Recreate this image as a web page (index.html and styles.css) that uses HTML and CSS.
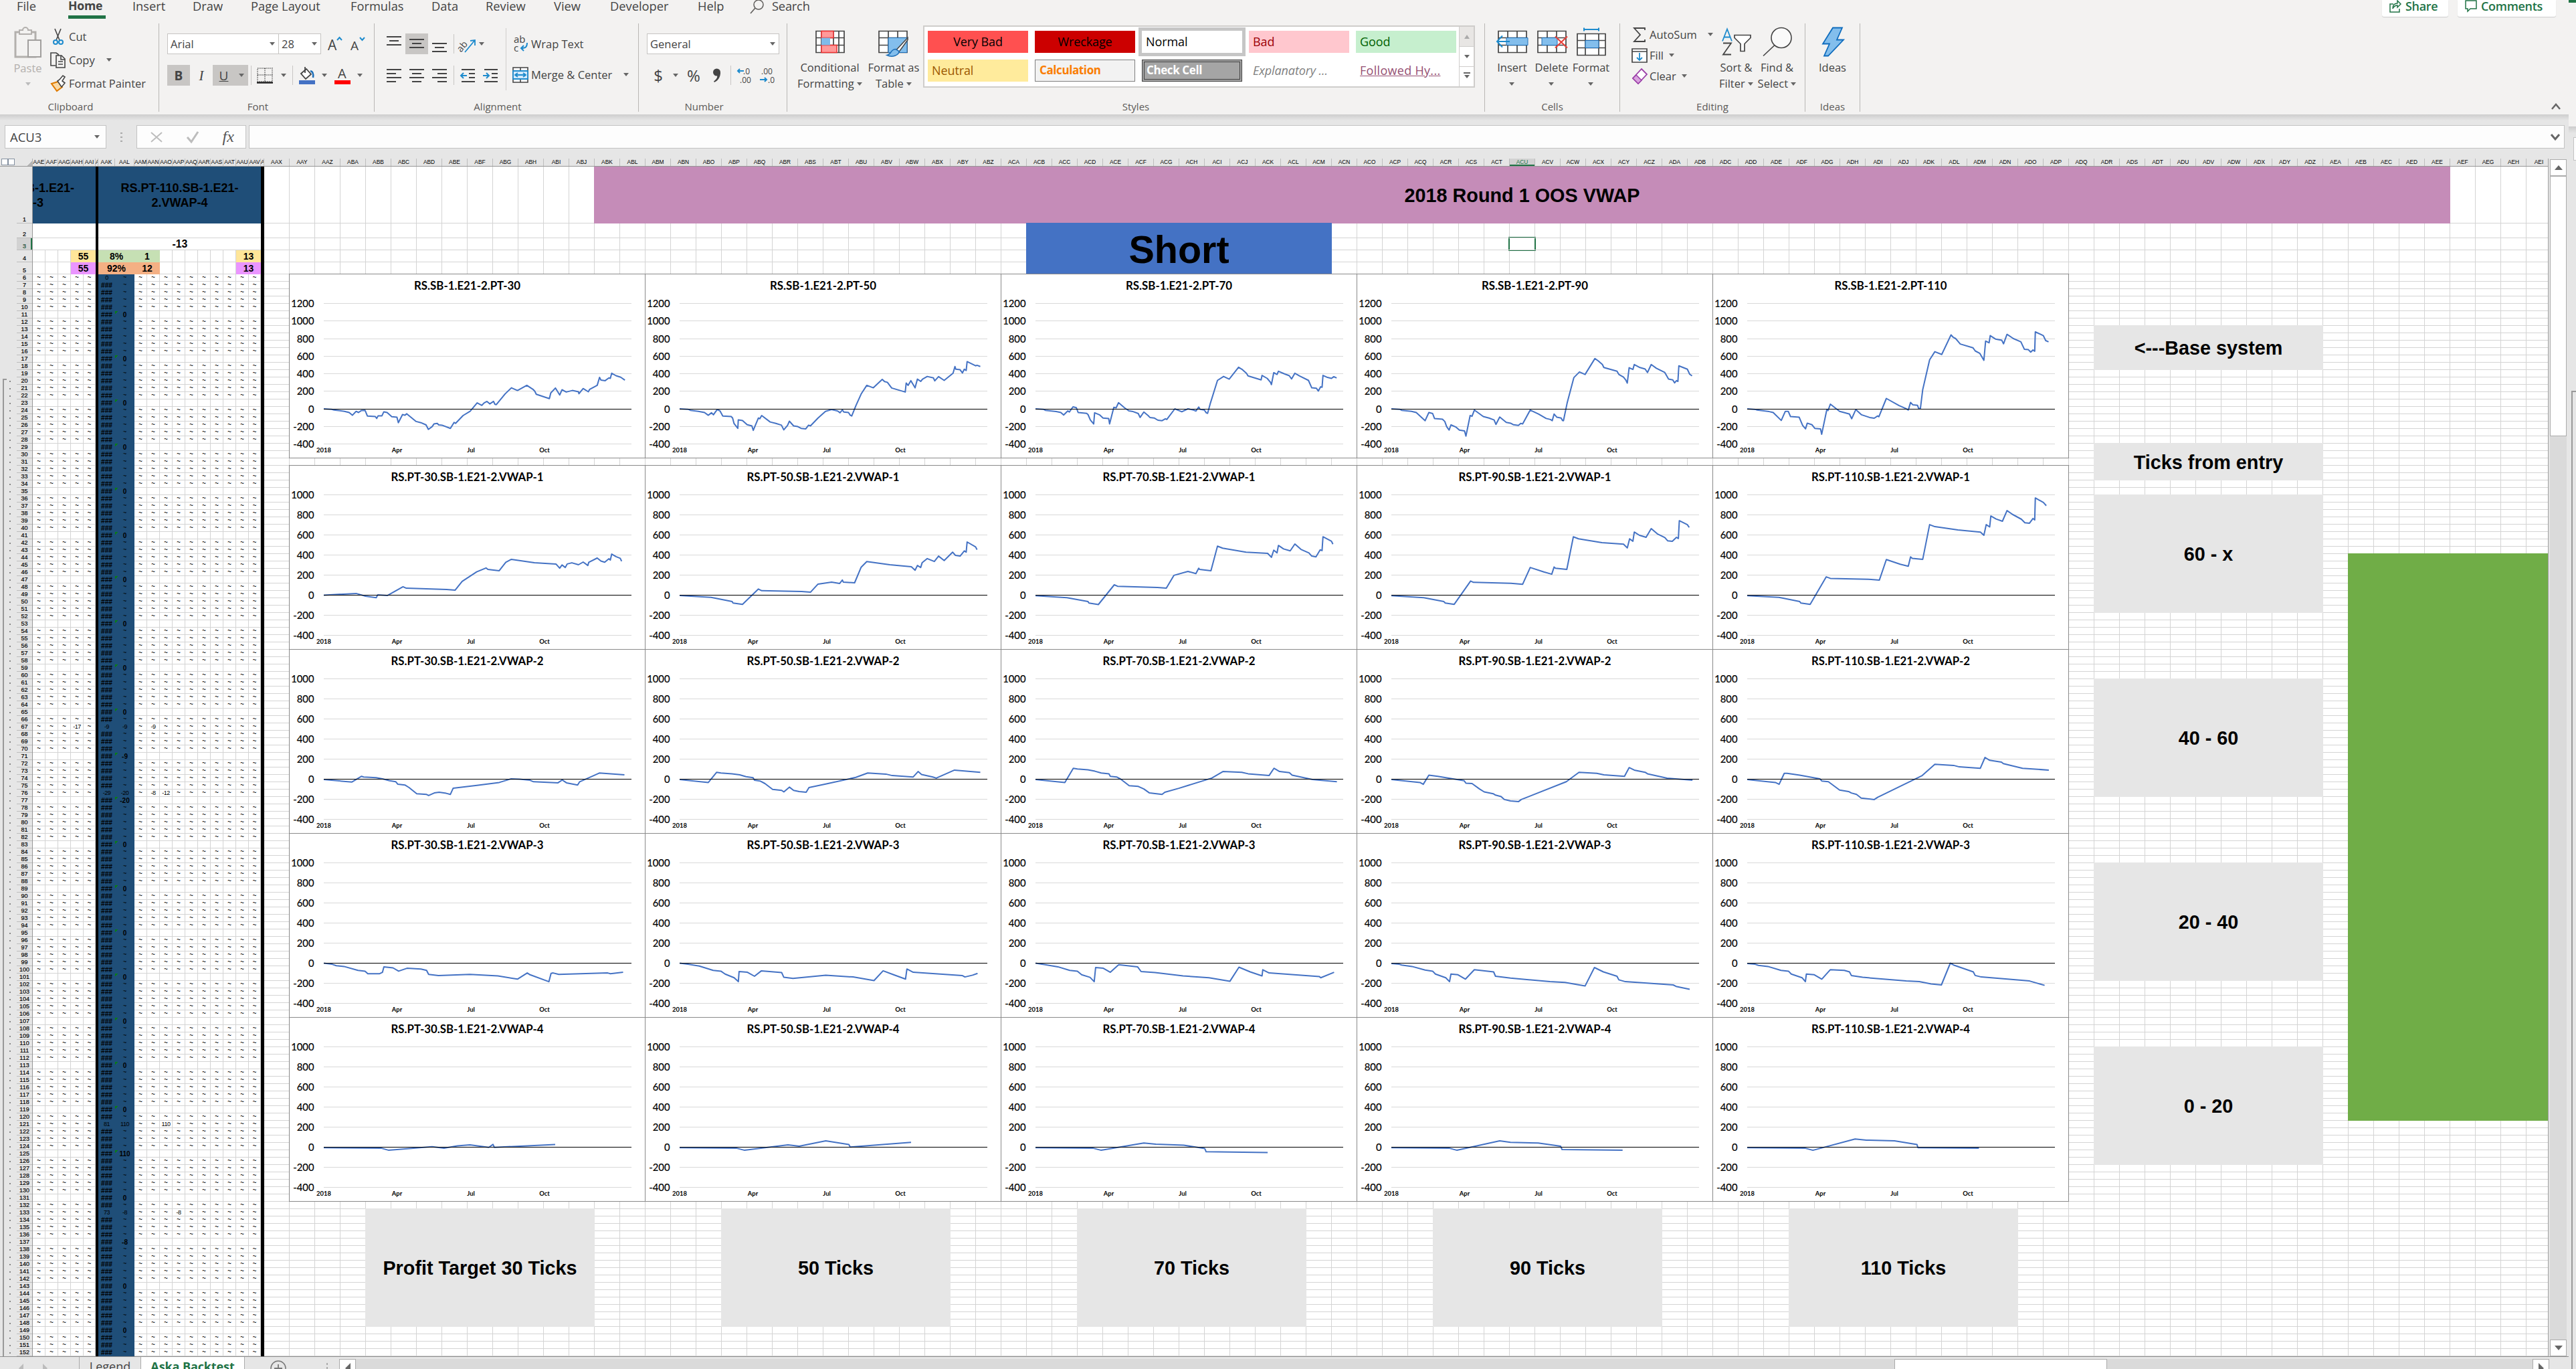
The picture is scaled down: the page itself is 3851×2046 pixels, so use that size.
FILE: index.html
```
<!DOCTYPE html>
<html lang="en">
<head>
<meta charset="utf-8">
<title>Aska Backtest</title>
<link rel="stylesheet" href="styles.css">
</head>
<body>
<div class="window">
  <header class="tabs-bar">
    <nav class="tabs">
      <span>File</span><span class="tab-active">Home</span><span>Insert</span><span>Draw</span><span>Page Layout</span><span>Formulas</span><span>Data</span><span>Review</span><span>View</span><span>Developer</span><span>Help</span>
      <svg class="search-icon" width="22" height="24" viewBox="0 0 22 24"><circle cx="13" cy="7" r="7" fill="none" stroke="#605e5c" stroke-width="1.5"/><path d="M8 12L1 20" stroke="#605e5c" stroke-width="1.6"/></svg>
      <span class="search">Search</span>
    </nav>
    <div class="share-buttons">
      <div class="pill"><svg width="18" height="20" viewBox="0 0 18 20"><path d="M6 7H1v12h14v-5M5 14c0-6 3-8 7-8V2l5 5-5 5V9c-3 0-5 1-7 5z" fill="none" stroke="#217346" stroke-width="1.5"/></svg>Share</div>
      <div class="pill comments"><svg width="18" height="20" viewBox="0 0 18 20"><path d="M1 2h16v12H8l-4 4v-4H1z" fill="none" stroke="#217346" stroke-width="1.5"/></svg>Comments</div>
    </div>
  </header>

  <section class="ribbon">
    <div class="group g-clipboard">
      <div class="body">
        <div class="paste">
          <svg width="42" height="46" viewBox="0 0 42 46"><path d="M2 7h30v37H2z" fill="#f3f2f1" stroke="#b3b0ad" stroke-width="3"/><path d="M8 4h5a4 4 0 0 1 8 0h5v6H8z" fill="#f3f2f1" stroke="#b3b0ad" stroke-width="2"/><path d="M21 19h19v25H21z" fill="#f3f2f1" stroke="#a19f9d" stroke-width="2"/></svg>
          <span>Paste</span><i class="arrow faded"></i>
        </div>
        <div class="lines">
          <div class="line"><svg width="24" height="24" viewBox="0 0 24 24"><path d="M7 0l7 17M16 0L9 17" stroke="#444" stroke-width="1.6"/><circle cx="8" cy="20" r="3" fill="none" stroke="#1e8bcd" stroke-width="2"/><circle cx="16" cy="20" r="3" fill="none" stroke="#1e8bcd" stroke-width="2"/></svg>Cut</div>
          <div class="line"><svg width="24" height="24" viewBox="0 0 24 24"><path d="M8 20H1V1h8l4 3M9 5h8l5 5v13H9zM16 5v6h6M12 14h7M12 18h7" fill="none" stroke="#444" stroke-width="1.6"/></svg>Copy<i class="arrow far"></i></div>
          <div class="line"><svg width="24" height="24" viewBox="0 0 24 24"><path d="M2 12l10-3 6 8-8 6z" fill="#fbd9a4" stroke="#e07b00" stroke-width="2"/><path d="M11 8l6 9 5-6-4-3 4-6-3-2-5 6z" fill="#fff" stroke="#444" stroke-width="1.6"/></svg>Format Painter</div>
        </div>
      </div>
      <div class="caption">Clipboard</div>
    </div>

    <div class="group g-font">
      <div class="body stack">
        <div class="bar">
          <div class="select face">Arial<i class="arrow"></i></div><div class="select size">28<i class="arrow"></i></div>
          <svg class="grow" width="26" height="26" viewBox="0 0 26 26"><text x="2" y="22" class="ic" font-size="21">A</text><path d="M16 7l3.500-4 3.500 4" fill="none" stroke="#1e8bcd" stroke-width="2"/></svg>
          <svg class="shrink" width="26" height="26" viewBox="0 0 26 26"><text x="2" y="22" class="ic" font-size="19">A</text><path d="M16 3l3.500 4 3.500-4" fill="none" stroke="#1e8bcd" stroke-width="2"/></svg>
        </div>
        <div class="font-tools">
          <b class="pressed">B</b><em>I</em><div class="pressed under"><u>U</u><i class="arrow"></i></div><i class="sep"></i>
          <svg width="24" height="24" viewBox="0 0 24 24"><path d="M1 1h22v20H1zM12 1v20M1 11h22" fill="none" stroke="#555" stroke-width="1.4" stroke-dasharray="1.500 1.500"/><path d="M0 22.500h24" stroke="#222" stroke-width="2.500"/></svg><i class="arrow"></i><i class="sep"></i>
          <svg width="26" height="26" viewBox="0 0 26 26"><path d="M4 10l8-7 7 8-8 7zM10 0v9" fill="#fff" stroke="#444" stroke-width="1.800"/><path d="M18 6c4 1 5 4 4 10" stroke="#1e6fb8" stroke-width="2.500" fill="none"/><path d="M1 20h24v6H1z" fill="#4472c4"/></svg><i class="arrow"></i>
          <svg width="26" height="26" viewBox="0 0 26 26"><text x="6" y="17" class="ic" font-size="20">A</text><path d="M1 20h24v6H1z" fill="#f00"/></svg><i class="arrow"></i>
        </div>
      </div>
      <div class="caption">Font</div>
    </div>

    <div class="group g-align">
      <div class="body">
        <div class="align-tools">
          <svg width="22" height="26" viewBox="0 0 22 26"><path d="M0 2h22M4 8h14M0 14h22" class="ln"/></svg>
          <span class="pressed"><svg width="22" height="26" viewBox="0 0 22 26"><path d="M0 6h22M4 12h14M0 18h22" class="ln"/></svg></span>
          <svg width="22" height="26" viewBox="0 0 22 26"><path d="M0 12h22M4 18h14M0 24h22" class="ln"/></svg>
          <i class="sep"></i>
          <svg width="26" height="26" viewBox="0 0 26 26"><text x="-4" y="18" class="ic" font-size="14" transform="rotate(-50 8 14)">ab</text><path d="M9 25L24 7M17 8l7-1v8" fill="none" stroke="#1e8bcd" stroke-width="1.800"/></svg>
          <i class="arrow first"></i>
          <svg width="22" height="22" viewBox="0 0 22 22"><path d="M0 2h22M0 8h14M0 14h22M0 20h14" class="ln"/></svg>
          <svg width="22" height="22" viewBox="0 0 22 22"><path d="M0 2h22M4 8h14M0 14h22M4 20h14" class="ln"/></svg>
          <svg width="22" height="22" viewBox="0 0 22 22"><path d="M0 2h22M8 8h14M0 14h22M8 20h14" class="ln"/></svg>
          <i class="sep"></i>
          <svg width="22" height="22" viewBox="0 0 22 22"><path d="M2 2h20M13 8h9M13 14h9M2 20h20" class="ln"/><path d="M10 11H1M5 7l-4 4 4 4" fill="none" stroke="#1e8bcd" stroke-width="2"/></svg>
          <svg width="22" height="22" viewBox="0 0 22 22"><path d="M2 2h20M13 8h9M13 14h9M2 20h20" class="ln"/><path d="M0 11h9M5 7l4 4-4 4" fill="none" stroke="#1e8bcd" stroke-width="2"/></svg>
        </div>
        <div class="merge-tools">
          <div class="line"><svg width="24" height="26" viewBox="0 0 24 26"><text x="2" y="11" class="ic" font-size="15">ab</text><text x="2" y="24" class="ic" font-size="15">c</text><path d="M22 11c0 6-2 8-9 8M17 15l-4 4 4 4" fill="none" stroke="#1e8bcd" stroke-width="2"/></svg>Wrap Text</div>
          <div class="line"><svg width="24" height="24" viewBox="0 0 24 24"><path d="M1 1h22v22H1zM12 1v5M12 18v5" fill="#fff" stroke="#444" stroke-width="1.600"/><path d="M1 6h22v12H1z" fill="#d5eafb" stroke="#1e8bcd" stroke-width="1.800"/><path d="M4 12h16M8 9l-4 3 4 3M16 9l4 3-4 3" fill="none" stroke="#1e8bcd" stroke-width="1.800"/></svg>Merge &amp; Center<i class="arrow far"></i></div>
        </div>
      </div>
      <div class="caption">Alignment</div>
    </div>

    <div class="group g-number">
      <div class="body stack">
        <div class="select general">General<i class="arrow"></i></div>
        <div class="number-tools"><span>$</span><i class="arrow"></i><span>%</span>
          <svg width="14" height="22" viewBox="0 0 14 22"><circle cx="6.500" cy="6" r="5.500" fill="#444"/><path d="M12 6c0 7-3 12-9 15l-1-1.500c4-3 6-6 5-9z" fill="#444"/></svg>
          <i class="sep"></i>
          <svg width="26" height="26" viewBox="0 0 26 26"><text x="10" y="11" class="ic" font-size="12">.0</text><text x="5" y="24" class="ic" font-size="12">.00</text><path d="M11 6H2M5 3L2 6l3 3" fill="none" stroke="#1e8bcd" stroke-width="2"/></svg>
          <svg width="26" height="26" viewBox="0 0 26 26"><text x="4" y="11" class="ic" font-size="12">.00</text><text x="14" y="24" class="ic" font-size="12">.0</text><path d="M2 19h10M9 16l3 3-3 3" fill="none" stroke="#1e8bcd" stroke-width="2"/></svg>
        </div>
      </div>
      <div class="caption">Number</div>
    </div>

    <div class="group g-styles">
      <div class="body">
        <div class="big cond"><svg width="44" height="36" viewBox="0 0 44 36"><path d="M1 2h42v32H1zM9 2v32M27 2v32M35 2v32M1 12h42M1 23h42" fill="#fff" stroke="#444" stroke-width="1.700"/><path d="M9 2h18v10H9zM9 23h23v11H9z" fill="#ff9999" stroke="#e33" stroke-width="1.500"/><path d="M9 12h13v11H9z" fill="#7fbbea"/></svg><span>Conditional<br>Formatting <i class="arrow"></i></span></div>
        <div class="big table"><svg width="46" height="44" viewBox="0 0 46 44"><path d="M1 6h42v32H1zM15 6v32M29 6v32M1 16h42M1 27h42" fill="#fff" stroke="#444" stroke-width="1.700"/><path d="M15 16h28v22H15z" fill="#83beec" stroke="#1e6fb8"/><path d="M44 16L27 34l4 3 13-18z" fill="#fff" stroke="#444" stroke-width="1.500"/><path d="M26 33c-8 0-6 8-13 9 8 4 18 0 18-6z" fill="#83beec" stroke="#1e6fb8" stroke-width="1.500"/></svg><span>Format as<br>Table <i class="arrow"></i></span></div>
        <div class="gallery">
          <div class="swatches">
            <span class="sw very-bad">Very Bad</span><span class="sw wreckage">Wreckage</span><span class="sw normal">Normal</span><span class="sw bad">Bad</span><span class="sw good">Good</span>
            <span class="sw neutral">Neutral</span><span class="sw calc">Calculation</span><span class="sw check">Check Cell</span><span class="sw expl">Explanatory ...</span><span class="sw follow">Followed Hy...</span>
          </div>
          <div class="spin"><span class="off"><i class="arrow up"></i></span><span><i class="arrow"></i></span><span><i class="arrow lined"></i></span></div>
        </div>
      </div>
      <div class="caption">Styles</div>
    </div>

    <div class="group g-cells">
      <div class="body">
        <div class="big"><svg width="48" height="36" viewBox="0 0 48 36"><path d="M3 2h42v32H3zM17 2v32M31 2v32M3 12h42M3 23h42" fill="#fff" stroke="#444" stroke-width="1.700"/><path d="M15 12h32v11H15z" fill="#83beec" stroke="#1e6fb8"/><path d="M20 17.500H2M9 9l-8 8.500 8 8.500" fill="none" stroke="#1e8bcd" stroke-width="2"/></svg><span>Insert<br><i class="arrow"></i></span></div>
        <div class="big"><svg width="48" height="36" viewBox="0 0 48 36"><path d="M3 2h42v32H3zM17 2v32M31 2v32M3 12h42M3 23h42" fill="#fff" stroke="#444" stroke-width="1.700"/><path d="M9 12h23v11H9z" fill="#83beec" stroke="#1e6fb8"/><path d="M29 10l18 17M47 10L29 27" stroke="#e8413b" stroke-width="2.200"/></svg><span>Delete<br><i class="arrow"></i></span></div>
        <div class="big"><svg width="48" height="44" viewBox="0 0 48 44"><path d="M3 10h42v32H3zM15 10v32M35 10v32M3 20h42M3 31h42" fill="#fff" stroke="#444" stroke-width="1.700"/><path d="M15 20h20v11H15z" fill="#83beec" stroke="#1e6fb8"/><path d="M13 1v5M35 1v5M13 3.500h22" stroke="#1e8bcd" stroke-width="2"/></svg><span>Format<br><i class="arrow"></i></span></div>
      </div>
      <div class="caption">Cells</div>
    </div>

    <div class="group g-edit">
      <div class="body">
        <div class="lines">
          <div class="line"><svg width="24" height="24" viewBox="0 0 24 24"><path d="M20 5V2H4l9 10-9 10h16v-3" fill="none" stroke="#444" stroke-width="1.800"/></svg>AutoSum<i class="arrow far"></i></div>
          <div class="line"><svg width="24" height="24" viewBox="0 0 24 24"><path d="M1 2h22v20H1zM1 6h22" fill="#fff" stroke="#444" stroke-width="1.700"/><path d="M12 8v11M8 15l4 4 4-4" fill="none" stroke="#1e8bcd" stroke-width="1.800"/></svg>Fill<i class="arrow near"></i></div>
          <div class="line"><svg width="24" height="24" viewBox="0 0 24 24"><path d="M15 1l8 8-13 14-8-8z" fill="#fff" stroke="#9b3fa8" stroke-width="1.800"/><path d="M7 10l8 8-5 5-8-8z" fill="#d9a3df" stroke="#9b3fa8" stroke-width="1.500"/></svg>Clear<i class="arrow near"></i></div>
        </div>
        <div class="big sort"><svg width="44" height="42" viewBox="0 0 44 42"><path d="M1 20L8 2l7 18M4 14h8" fill="none" stroke="#1e8bcd" stroke-width="1.800"/><path d="M2 23h12L2 40h12" fill="none" stroke="#444" stroke-width="1.800"/><path d="M19 11h24v4l-9 9v11h-6V24l-9-9z" fill="#fff" stroke="#444" stroke-width="1.700"/></svg><span>Sort &amp;<br>Filter <i class="arrow"></i></span></div>
        <div class="big find"><svg width="44" height="44" viewBox="0 0 44 44"><circle cx="28" cy="16" r="15" fill="#fafafa" stroke="#444" stroke-width="1.600"/><path d="M18 27L1 43" stroke="#444" stroke-width="1.700"/></svg><span>Find &amp;<br>Select <i class="arrow"></i></span></div>
      </div>
      <div class="caption">Editing</div>
    </div>

    <div class="group g-ideas">
      <div class="body"><div class="big"><svg width="34" height="44" viewBox="0 0 34 44"><path d="M17 1h14l-8 18h10L10 43H4l8-18H2z" fill="#83beec" stroke="#0f6cbd" stroke-width="1.800"/></svg><span>Ideas</span></div></div>
      <div class="caption">Ideas</div>
    </div>
    <svg class="collapse" width="16" height="12" viewBox="0 0 16 12"><path d="M2 10l6-7 6 7" fill="none" stroke="#666" stroke-width="2.500"/></svg>
  </section>

  <section class="formula-bar">
    <div class="name-box">ACU3<i class="arrow"></i></div>
    <div class="dots"><i></i><i></i><i></i></div>
    <div class="fx-box">
      <svg width="20" height="18" viewBox="0 0 20 18"><path d="M2 2l16 14M18 2L2 16" stroke="#bdbdbd" stroke-width="2"/></svg>
      <svg width="20" height="18" viewBox="0 0 20 18"><path d="M2 9l6 7L18 1" fill="none" stroke="#bdbdbd" stroke-width="3"/></svg>
      <span class="fx">fx</span>
    </div>
    <div class="formula"><svg width="14" height="12" viewBox="0 0 14 12"><path d="M1 2l6 7 6-7" fill="none" stroke="#666" stroke-width="3"/></svg></div>
  </section>

  <main class="workspace">
    <div class="sheet">
      <div class="col-heads">
        <div class="levels"><i></i><i></i></div><div class="corner"></div><div class="cols-left" id="colsLeft"></div><div class="cols-right" id="colsRight"></div>
      </div>
      <div class="sheet-body">
        <div class="gutter"><div class="outline"></div></div>
        <div class="row-heads" id="rowHeads"></div>
        <div class="cells" id="cells">
          <div class="strategy s3"><span>RS.PT-110.SB-1.E21-<br>2.VWAP-3</span></div>
          <div class="strategy s4"><span>RS.PT-110.SB-1.E21-<br>2.VWAP-4</span></div>
          <div class="blank b2"></div><div class="blank b3"></div><div class="blank b4"></div><div class="total">-13</div>
          <div class="stat y1">55</div><div class="stat p1">55</div>
          <div class="stat win">8%</div><div class="stat win n">1</div><div class="stat loss">92%</div><div class="stat loss n">12</div>
          <div class="stat y2">13</div><div class="stat p2">13</div>
          <div class="divider d1"></div><div class="divider d2"></div>
        </div>
        <div class="canvas" id="canvas">
          <div class="merged banner">2018 Round 1 OOS VWAP</div>
          <div class="merged short">Short</div>
          <div class="active-cell"></div>
          <div class="merged side base">&lt;---Base system</div>
          <div class="merged side entry">Ticks from entry</div>
          <div class="merged side t60">60 - x</div>
          <div class="merged side t40">40 - 60</div>
          <div class="merged side t20">20 - 40</div>
          <div class="merged side t0">0 - 20</div>
          <div class="merged green"></div>
          <div class="merged foot f30">Profit Target 30 Ticks</div>
          <div class="merged foot f50">50 Ticks</div>
          <div class="merged foot f70">70 Ticks</div>
          <div class="merged foot f90">90 Ticks</div>
          <div class="merged foot f110">110 Ticks</div>
        </div>
      </div>
    </div>
    <div class="vscroll"><div class="btn"><i class="arrow up"></i></div><div class="vthumb"></div><div class="vtrack"></div><div class="btn down"><i class="arrow"></i></div></div>
  </main>

  <footer class="sheet-tabs">
    <svg class="nav" width="118" height="19" viewBox="0 0 118 19"><path d="M35 10v14l-7-7zM64 10v14l7-7z" fill="#bcbcbc"/></svg>
    <span class="stab">Legend</span><span class="stab current">Aska Backtest</span>
    <svg class="add" width="140" height="19" viewBox="0 0 140 19"><circle cx="50" cy="17" r="11" fill="none" stroke="#777" stroke-width="1.500"/><path d="M50 11v12M44 17h12" stroke="#777" stroke-width="1.800"/><path d="M123 9v3M123 15v3" stroke="#aaa" stroke-width="2"/></svg>
    <div class="hscroll"><div class="hbtn"><svg width="8" height="14" viewBox="0 0 8 14"><path d="M8 0v14L0 8z" fill="#666"/></svg></div><div class="htrack"></div><div class="hthumb"></div><div class="hrest"></div><div class="hbtn"><svg width="8" height="14" viewBox="0 0 8 14"><path d="M0 0v14l8-6z" fill="#666"/></svg></div></div>
  </footer>
</div>
<aside class="behind"><div class="b-green"></div><div class="b-ribbon"></div><div class="b-shade"></div><div class="b-input"></div><div class="b-sheet"></div></aside>
<script src="app.js"></script>
</body>
</html>
```
FILE: styles.css
```
* { box-sizing: border-box; }
body { margin: 0; width: 3851px; height: 2046px; overflow: hidden; display: flex; background: #e6e6e6; font-family: "Open Sans", "Noto Sans", sans-serif; color: #444; }
i, em { font-style: normal; }
svg { display: block; flex: none; overflow: visible; }
.window { width: 3840px; height: 2046px; display: flex; flex-direction: column; flex: none; }
.arrow { display: inline-block; width: 0; height: 0; border: 4.5px solid transparent; border-top: 5px solid #666; border-bottom: 0; flex: none; }
.arrow.faded { border-top-color: #bbb; }
.arrow.up { border-top: 0; border-bottom: 6px solid #aaa; }
.arrow.far { margin-left: 13px; }
.arrow.near { margin-left: 5px; }
.sep { width: 1px; height: 29px; background: #c8c6c4; }
.ic { font-family: "Open Sans", sans-serif; fill: #444; }
.ln { stroke: #444; stroke-width: 1.8; fill: none; }

/* ribbon tabs */
.tabs-bar { height: 35px; flex: none; background: #f3f2f1; display: flex; justify-content: space-between; }
.tabs { display: grid; grid-template-columns: 77px 96px 90px 87px 149px 121px 81px 102px 84px 131px 78px 33px auto; padding-left: 25px; font-size: 18.3px; line-height: 17px; height: 28px; white-space: nowrap; }
.tab-active { font-weight: 700; font-size: 17.6px; height: 28px; width: 56px; border-bottom: 5px solid #217346; letter-spacing: -.2px; }
.search { letter-spacing: -.2px; }
.share-buttons { display: flex; gap: 14px; padding-right: 19px; }
.pill { height: 25px; width: 99px; padding: 0 0 8px 11px; display: flex; gap: 6px; align-items: center; background: #fff; border-radius: 0 0 3px 3px; box-shadow: 0 1px 1px #ccc; color: #217346; font-weight: 600; font-size: 18px; letter-spacing: -.3px; }
.pill.comments { width: 147px; }

/* ribbon groups */
.ribbon { height: 136px; flex: none; background: #f3f2f1; display: flex; font-size: 16.5px; line-height: 24px; }
.group { height: 132px; border-right: 1px solid #b9b7b5; flex: none; display: flex; flex-direction: column; white-space: nowrap; }
.body { height: 114px; display: flex; flex: none; }
.caption { font-size: 15px; line-height: 20px; text-align: center; color: #5c5a58; padding-right: 26px; }
.g-clipboard { width: 238px; }
.g-font { width: 322px; }
.g-align { width: 395px; }
.g-number { width: 222px; }
.g-styles { width: 1043px; } .g-cells { width: 202px; } .g-edit { width: 277px; } .g-ideas { width: 82px; }
.g-styles .caption, .g-cells .caption, .g-edit .caption, .g-ideas .caption { padding: 0; }
.line { display: flex; align-items: center; gap: 4px; height: 35px; }
.paste { width: 75px; display: flex; flex-direction: column; align-items: center; padding: 6px 0 0 8px; color: #b3b0ad; }
.paste span { margin-top: 3px; }
.paste .arrow { margin-top: 9px; }
.lines { padding-top: 2px; }
.stack { flex-direction: column; padding: 15px 0 0 12px; gap: 16px; }
.bar { display: flex; height: 31px; align-items: center; }
.select { height: 31px; background: #fff; border: 1px solid #c6c4c2; padding: 0 5px 0 4px; display: flex; align-items: center; justify-content: space-between; }
.face { width: 167px; } .size { width: 64px; margin-left: -1px; } .general { width: 198px; }
.grow { margin-left: 8px; } .shrink { margin-left: 8px; }
.font-tools { display: grid; grid-template-columns: 34px 34px 53px 8px 34px 22px 4px 40px 12px 41px 12px; height: 31px; align-items: center; justify-items: center; font-size: 19px; }
.pressed { background: #c8c6c4; width: 100%; height: 31px; display: flex; align-items: center; justify-content: center; }
.font-tools em { font-family: "Liberation Serif", serif; font-style: italic; font-size: 21px; }
.under { gap: 16px; padding-left: 4px; }
.align-tools { width: 196px; padding: 15px 0 0 12px; display: grid; grid-template-columns: 34px 34px 34px 8px 34px 34px; grid-template-rows: 31px 31px; row-gap: 16px; align-items: center; justify-items: center; }
.arrow.first { justify-self: start; }
.merge-tools { margin-top: 7px; height: 93px; border-left: 1px solid #d0cecc; padding: 6px 0 0 9px; display: flex; flex-direction: column; gap: 11px; }
.number-tools { display: grid; grid-template-columns: 34px 18px 36px 34px 6px 38px 28px; height: 31px; align-items: center; justify-items: center; font-size: 24px; }
.big { display: flex; flex-direction: column; align-items: center; text-align: center; width: 59px; }
.big svg { height: 55px; padding: 5px 0; }
.big span { margin-top: -1px; }
.big .arrow { vertical-align: 3px; }
.cond { width: 105px; margin-left: 11px; } .table { width: 82px; margin-left: 2px; }
.gallery { margin: 3px 0 0 3px; width: 825px; height: 93px; background: #fff; border: 2px solid #cfcdcb; display: flex; justify-content: space-between; }
.swatches { padding: 6px 0 0 5px; display: grid; grid-template-columns: repeat(5, 150px); grid-auto-rows: 33px; gap: 10px; font-size: 18px; }
.sw { padding-left: 6px; line-height: 32px; letter-spacing: -.1px; }
.very-bad { background: #ff5050; color: #000; text-align: center; padding: 0; }
.wreckage { background: #c00; color: #000; text-align: center; padding: 0; }
.normal { color: #000; box-shadow: 0 0 0 5px #c6c6c6; }
.bad { background: #ffc7ce; color: #9c0006; } .good { background: #c6efce; color: #006100; }
.neutral { background: #ffeb9c; color: #9c5700; }
.calc { background: #f2f2f2; border: 1px solid #7f7f7f; color: #fa7d00; font-weight: 700; font-size: 17px; letter-spacing: -.4px; line-height: 30px; }
.check { background: #a5a5a5; border: 4px double #3f3f3f; color: #fff; font-weight: 700; font-size: 17px; line-height: 24px; padding-left: 3px; letter-spacing: -.4px; }
.expl { color: #7f7f7f; font-style: italic; } .follow { color: #954f72; text-decoration: underline; letter-spacing: .3px; }
.spin { width: 22px; border-left: 1px solid #cfcdcb; display: flex; flex-direction: column; }
.spin span { flex: 1; display: flex; align-items: center; justify-content: center; border-top: 1px solid #cfcdcb; }
.spin .off { background: #e8e6e4; border: 0; }
.lined { position: relative; } .lined::before { content: ""; position: absolute; left: -5px; top: -9px; width: 10px; height: 1.5px; background: #666; }
.g-cells .big:first-child { margin-left: 11px; }
.g-edit .lines { width: 143px; padding: 1px 0 0 17px; } .g-edit .line { height: 31px; gap: 3px; }
.sort, .find { width: 61px; }
.g-ideas .big { width: 82px; }
.collapse { margin: 118px 0 0 1032px; }

/* formula bar */
.formula-bar { height: 66px; flex: none; padding: 16px 6px 0 7px; display: flex; align-items: flex-start; background: linear-gradient(#cdcdcd, #e6e6e6 9px); }
.name-box, .fx-box, .formula { height: 35px; background: #fdfdfd; border: 1px solid #c3c3c3; display: flex; align-items: center; }
.name-box { width: 152px; padding: 0 9px 0 7px; justify-content: space-between; font-size: 18.5px; }
.dots { width: 45px; height: 35px; display: flex; flex-direction: column; align-items: center; justify-content: center; gap: 4px; }
.dots i { width: 3px; height: 2px; background: #aaa; }
.fx-box { width: 164px; justify-content: space-around; padding: 0 0 0 2px; }
.fx { font: italic 24px "Liberation Serif", serif; color: #555; }
.formula { flex: 1; margin-left: 4px; justify-content: flex-end; padding-right: 6px; }

/* worksheet */
.workspace { display: flex; height: 1790px; flex: none; }
.sheet { width: 3810px; overflow: hidden; flex: none; border-right: 1px solid #9f9f9f; }
.col-heads { display: flex; height: 12px; border-bottom: 1px solid #979797; font: 8.4px/11px "Liberation Sans", Arial, sans-serif; color: #000; width: 3815px; }
.levels { width: 25px; display: flex; padding-left: 2px; } .levels i { width: 10px; height: 10px; border: 1px solid #8490a0; background: #fff; }
.corner { width: 24px; border-right: 1px solid #b0b0b0; background: linear-gradient(135deg, transparent 78%, #b5b5b5 78%); }
.cols-left { display: grid; grid-template-columns: repeat(4, 19px) 18px 4px 25px 29px repeat(9, 19px) 18px 5px; }
.cols-right { display: grid; grid-template-columns: repeat(90, 38px); }
.cols-left span, .cols-right span { border-right: 1px solid #bdbdbd; text-align: center; overflow: hidden; white-space: nowrap; }
.cols-right .sel { background: #d2d2d2; color: #217346; box-shadow: inset 0 -2px #217346; }
.sheet-body { display: flex; height: 1778px; width: 3815px; }
.gutter { width: 25px; flex: none; padding: 317px 0 0 4px; }
.outline { height: 1461px; border-left: 2px solid #999; background-image: linear-gradient(#999, #999), radial-gradient(circle at 9px 4px, #888 1.3px, transparent 1.5px); background-size: 4px 2px, 20px 11px; background-repeat: no-repeat, repeat-y; background-position: 0 0; }
.row-heads, .cells, .canvas { display: grid; grid-template-rows: 85px 22px 18px 18px 18px repeat(147, 11px); flex: none; }
.row-heads { width: 24px; border-right: 1px solid #979797; font: 9px/9px "Liberation Sans", Arial, sans-serif; color: #000; }
.row-heads span { display: flex; align-items: flex-end; justify-content: center; border-bottom: 1px solid #bdbdbd; -webkit-text-stroke: .2px #000; }
.row-heads .sel { background: #d2d2d2; color: #217346; box-shadow: inset -2px 0 #217346; }
.cells { width: 346px; grid-template-columns: repeat(4, 19px) 18px 4px 25px 29px repeat(9, 19px) 18px 5px; background: #fff; font: 9px/10px "Liberation Sans", Arial, sans-serif; color: #000; }
.c { border-right: 1px solid #d4d4d4; border-bottom: 1px solid #d4d4d4; text-align: center; white-space: nowrap; letter-spacing: -.5px; }
.c.mark { line-height: 7px; font-size: 9.5px; font-weight: 700; letter-spacing: 0; }
.c.blue { background: #1f4e78; border: 0; }
.c.blue.mark { font-weight: 400; }
.c.hash { font-size: 10.2px; font-weight: 700; letter-spacing: 0; line-height: 11px; }
.c.sum { font-weight: 700; font-size: 10px; line-height: 11px; letter-spacing: 0; }
.c.flag { background: linear-gradient(135deg, #0a7d16 3px, transparent 3.5px) #1f4e78; }
.strategy { background: #1f4e78; overflow: hidden; display: flex; align-items: center; justify-content: center; text-align: center; font-weight: 700; font-size: 18px; line-height: 22px; white-space: nowrap; grid-row: 1; }
.s3 { grid-column: 1 / 6; justify-content: flex-end; padding-right: 32px; } .s4 { grid-column: 7 / 19; }
.blank, .total { border-bottom: 1px solid #d4d4d4; }
.b2 { grid-row: 2; grid-column: 1 / 6; } .b3 { grid-row: 2; grid-column: 7 / 19; } .b4 { grid-row: 3; grid-column: 1 / 6; }
.total { grid-row: 3; grid-column: 7 / 19; font-weight: 700; font-size: 15.8px; line-height: 18px; text-align: center; padding-left: 1px; }
.stat { font-weight: 700; font-size: 14px; line-height: 18px; text-align: center; z-index: 1; }
.y1, .y2 { grid-row: 4; background: #ffe699; } .p1, .p2 { grid-row: 5; background: #ea95ff; }
.y1, .p1 { grid-column: 4 / 6; } .y2, .p2 { grid-column: 17 / 19; }
.win { grid-row: 4; grid-column: 7 / 9; background: #c6e0b4; } .loss { grid-row: 5; grid-column: 7 / 9; background: #f4b084; }
.stat.n { grid-column: 9 / 11; }
.divider { background: #000; grid-row: 1 / -1; z-index: 2; } .d1 { grid-column: 6; } .d2 { grid-column: 19; }
.canvas { width: 3420px; grid-template-columns: repeat(90, 38px); background: linear-gradient(90deg, transparent 37px, #d4d4d4 37px) 0 0 / 38px 100% #fff; }
.rule { grid-column: 1 / -1; border-bottom: 1px solid #d4d4d4; }
.merged { margin: -1px 0 0 -1px; padding-top: 2px; display: flex; align-items: center; justify-content: center; font: 700 28.8px "Liberation Sans", Arial, sans-serif; color: #000; white-space: nowrap; z-index: 1; }
.banner { grid-area: 1 / 14 / 2 / 87; background: #c58cb8; margin-top: 0; }
.short { grid-area: 2 / 31 / 6 / 43; background: #4472c4; font-size: 57.5px; }
.active-cell { grid-area: 3 / 50 / 4 / 51; border: 2px solid #217346; margin: -2px -1px -1px -2px; }
.side { background: #e6e6e6; grid-column: 73 / 82; }
.base { grid-row: 13 / 19; } .entry { grid-row: 29 / 34; } .t60 { grid-row: 36 / 52; } .t40 { grid-row: 61 / 77; } .t20 { grid-row: 86 / 102; } .t0 { grid-row: 111 / 127; }
.green { grid-area: 44 / 83 / 121 / 91; background: #70ad47; }
.foot { background: #e6e6e6; grid-row: 133 / 149; }
.f30 { grid-column: 5 / 14; } .f50 { grid-column: 19 / 28; } .f70 { grid-column: 33 / 42; } .f90 { grid-column: 47 / 56; } .f110 { grid-column: 61 / 70; }

/* charts */
.chart { margin: -1px 0 0 -1px; background: #fff; border: 1px solid #8a8a8a; z-index: 2; width: 533px; height: 276px; }
.chart svg { font-family: Lato, Carlito, sans-serif; fill: #000; margin: -1px; }
.chart .title { font-weight: 700; font-size: 16.6px; text-anchor: middle; }
.chart .val { font-size: 14.8px; text-anchor: end; stroke: #000; stroke-width: .2px; }
.chart .month { font-size: 9.4px; font-weight: 700; text-anchor: middle; }
.chart .grid { stroke: #d9d9d9; stroke-width: 1; }
.chart .axis { stroke: #000; stroke-width: 1.1; }
.chart .series { fill: none; stroke: #4472c4; stroke-width: 2; stroke-linejoin: round; }

/* scrollbars and sheet tabs */
.vscroll { width: 30px; padding: 1px 3px 0 2px; display: flex; flex-direction: column; }
.btn { height: 25px; background: #fff; border: 1px solid #ababab; display: flex; align-items: center; justify-content: center; flex: none; }
.btn .arrow { border-left-width: 6px; border-right-width: 6px; border-top-width: 7px; } .btn .arrow.up { border-top-width: 0; border-bottom: 7px solid #666; }
.vthumb { height: 389px; background: #fff; border: 1px solid #ababab; flex: none; }
.vtrack { flex: 1; background: #dadada; }
.sheet-tabs { flex: 1; display: flex; border-top: 1px solid #8f8f8f; overflow: hidden; font-size: 18px; line-height: 28px; white-space: nowrap; }
.stab { width: 92px; text-align: center; border-left: 1px solid #ababab; height: 30px; }
.stab.current { width: 156px; background: #fff; border-right: 1px solid #ababab; color: #217346; font-weight: 700; letter-spacing: -.1px; }
.hscroll { display: flex; margin: 3px 0 0 1px; height: 20px; }
.hbtn { width: 25px; background: #fff; border: 1px solid #ababab; display: flex; align-items: flex-start; justify-content: center; padding-top: 5px; }
.htrack { width: 2300px; background: #dadada; } .hthumb { width: 318px; background: #fff; border: 1px solid #ababab; } .hrest { width: 636px; background: #dadada; }

/* edge of the window underneath */
.behind { width: 11px; height: 2046px; display: flex; flex-direction: column; background: #e6e6e6; }
.b-green { height: 4px; background: #217346; } .b-ribbon { height: 185px; background: #f3f2f1; }
.b-shade { height: 16px; background: linear-gradient(#cdcdcd, #e6e6e6 10px); }
.b-input { height: 35px; margin-left: 7px; background: #fdfdfd; border: 1px solid #c3c3c3; border-right: 0; }
.b-sheet { flex: 1; margin: 344px 0 0 4px; border-left: 2px solid #999; border-top: 2px solid #999; }
```
FILE: app.js
```
const $ = id => document.getElementById(id);
const add = (parent, cls, text, tag = 'div') => {
  const el = document.createElement(tag);
  el.className = cls;
  if (text) el.textContent = text;
  parent.append(el);
  return el;
};
const letter = n => String.fromCharCode(65 + n);

// Column headings
for (let i = 4; i <= 22; i++) add($('colsLeft'), '', 'AA' + letter(i), 'span');
for (let i = 23; i < 113; i++) {
  const name = 'A' + letter(Math.floor(i / 26)) + letter(i % 26);
  add($('colsRight'), name === 'ACU' ? 'sel' : '', name, 'span');
}

// Row headings and horizontal rules
for (let r = 1; r <= 152; r++) {
  add($('rowHeads'), r === 3 ? 'sel' : '', String(r), 'span');
  add($('canvas'), 'rule').style.gridRow = r;
}

// Trade cells: columns are numbered from AAE = 1
const values = {
  67: { 4: '-17', 7: '-9', 8: '-9', 10: '-9' },
  76: { 7: '-29', 8: '-20', 10: '-8', 11: '-12' },
  121: { 7: '81', 8: '110', 11: '110' },
  133: { 7: '73', 8: '-8', 12: '-8' },
  6: { 7: '0' }
};
const sums = { 71: '-9', 77: '-20', 125: '110', 137: '-8' };
for (let r = 4; r <= 152; r++) {
  const sumRow = r > 6 && (r - 5) % 6 === 0;
  for (let c = 1; c <= 18; c++) {
    if (c === 6) continue;
    let cls = 'c', text = '';
    if (c === 7 || c === 8) cls += r > 5 ? ' blue' : '';
    if (r > 5) {
      const v = values[r] && values[r][c];
      if (v) text = v;
      else if (c === 7) { text = '###'; cls += ' hash'; }
      else if (sumRow) { if (c === 8) { text = sums[r] || '0'; cls += ' sum' + (r < 130 ? ' flag' : ''); } }
      else { text = '~'; cls += ' mark'; }
    }
    const el = add($('cells'), cls, text);
    el.style.gridArea = r + ' / ' + c;
  }
}

// Charts. Each series is traced in its own frame: x origin, x width; y zero and y step per 200 come from the row.
const columns = ['30', '50', '70', '90', '110'];
const rows = [
  { line: 6, top: 1200, zero: 571, step: 71, data: [
    [91, 656, '91,571 108,573 113,576 135,581 145,586 152,597 160,581 165,586 171,578 179,577 184,600 201,602 204,610 207,599 215,599 219,583 226,586 236,603 247,605 250,627 259,594 264,597 268,591 288,622 298,627 309,636 314,654 322,643 326,632 333,630 336,636 343,637 361,650 369,626 372,630 388,598 403,581 418,547 428,557 433,547 439,541 445,551 453,541 456,553 459,554 478,510 491,486 504,497 524,476 537,492 541,500 544,512 572,530 575,507 585,487 594,515 599,494 608,503 621,497 634,502 635,510 644,489 655,502 658,492 674,476 679,444 682,455 691,457 699,446 702,448 705,427 714,437 724,443 733,455'],
    [850, 656, '850,571 868,573 873,577 890,581 903,586 911,597 918,587 922,595 930,574 936,579 942,600 960,602 963,608 966,630 974,650 975,616 984,618 994,635 1004,640 1007,658 1018,608 1021,611 1025,598 1043,624 1055,630 1067,637 1072,656 1080,638 1084,621 1093,640 1102,643 1109,650 1119,652 1125,637 1129,640 1145,608 1161,581 1174,574 1187,580 1192,587 1197,575 1200,584 1210,586 1214,597 1217,600 1226,557 1237,511 1249,476 1263,486 1282,452 1287,461 1293,464 1302,487 1331,503 1333,467 1337,476 1343,457 1352,486 1357,451 1364,460 1368,451 1378,440 1391,446 1394,458 1402,441 1414,456 1433,427 1437,400 1439,411 1448,413 1453,426 1457,411 1461,416 1463,380 1481,397 1484,395 1491,400'],
    [83, 656, '83,571 100,573 104,577 127,582 137,586 143,596 152,579 155,584 163,563 170,566 174,586 192,589 195,594 200,616 207,632 209,587 220,596 227,608 239,610 241,632 250,565 255,567 260,546 273,567 282,579 291,582 302,590 306,606 314,584 323,598 327,606 336,608 344,617 353,619 360,611 363,614 380,571 395,583 408,571 420,576 425,580 431,564 434,573 443,576 447,587 450,589 456,547 471,456 484,440 496,451 516,403 523,411 533,428 536,438 564,454 566,436 577,448 584,464 586,473 591,425 598,432 601,419 613,429 624,437 629,450 636,427 646,438 665,456 672,486 682,488 686,499 691,482 694,484 696,436 704,443 714,448 719,441 725,446'],
    [841, 656, '841,571 859,573 863,577 884,581 894,586 913,619 921,586 929,590 933,610 950,613 955,622 959,643 964,657 968,636 979,645 986,657 997,660 1000,681 1009,598 1013,601 1018,576 1037,602 1049,608 1060,616 1064,634 1072,604 1086,626 1095,629 1101,635 1112,638 1117,630 1121,632 1137,576 1155,592 1171,610 1180,614 1184,619 1188,592 1194,605 1203,608 1206,618 1208,619 1216,545 1230,445 1242,422 1254,432 1275,368 1282,377 1291,392 1294,404 1322,419 1326,432 1336,443 1341,455 1344,467 1348,405 1356,412 1359,392 1371,404 1382,410 1387,424 1395,392 1406,407 1424,424 1432,451 1441,454 1445,466 1449,457 1452,460 1454,397 1472,411 1477,431 1482,438'],
    [130, 533, '130,571 145,574 147,576 168,582 175,586 189,618 196,581 201,581 205,602 220,605 226,638 231,652 234,629 242,635 247,650 257,652 259,674 268,573 270,578 274,552 290,581 307,592 311,611 318,574 328,595 342,606 350,609 356,600 358,603 371,529 393,558 405,570 409,576 413,545 417,555 425,557 427,569 430,570 434,493 446,373 455,340 467,351 483,272 487,282 491,287 499,309 521,324 525,337 533,347 540,375 543,297 549,304 551,275 560,289 571,294 574,308 580,270 591,287 604,300 610,330 617,332 621,342 625,333 628,338 629,260 643,275 647,295 652,300']
  ] },
  { line: 32, top: 1000, zero: 1323, step: 81.14, data: [
    [91, 656, '91,1323 160,1316 180,1327 203,1333 206,1322 227,1324 260,1289 267,1295 353,1300 371,1303 386,1267 417,1229 437,1213 441,1219 465,1224 479,1190 491,1178 540,1192 586,1197 594,1214 599,1201 606,1211 610,1197 620,1192 634,1200 644,1189 654,1203 656,1190 674,1173 682,1185 690,1190 699,1176 702,1181 705,1157 714,1167 723,1174 726,1186'],
    [850, 656, '850,1324 917,1332 962,1349 964,1355 984,1360 1018,1298 1025,1305 1110,1308 1129,1311 1145,1278 1174,1270 1191,1276 1197,1262 1199,1270 1223,1273 1237,1210 1249,1187 1298,1200 1344,1208 1352,1222 1357,1203 1364,1211 1367,1192 1378,1175 1393,1187 1402,1165 1414,1183 1432,1149 1438,1162 1448,1165 1457,1144 1461,1149 1463,1108 1481,1128 1484,1139'],
    [83, 656, '83,1325 150,1333 195,1349 197,1355 217,1361 251,1281 258,1287 343,1292 362,1295 378,1243 408,1227 425,1236 431,1214 433,1219 457,1224 471,1125 482,1133 532,1149 578,1154 586,1170 591,1141 598,1152 601,1122 612,1136 626,1144 636,1116 649,1138 666,1152 672,1165 681,1168 690,1140 694,1143 696,1087 714,1105 717,1117'],
    [841, 656, '841,1325 910,1333 953,1349 956,1355 975,1360 1010,1266 1016,1271 1096,1275 1121,1279 1137,1211 1166,1229 1183,1238 1188,1209 1191,1214 1215,1219 1229,1087 1240,1095 1290,1111 1336,1117 1344,1132 1349,1095 1356,1105 1359,1068 1370,1081 1384,1089 1395,1054 1408,1075 1424,1090 1430,1103 1440,1105 1449,1089 1453,1094 1455,1022 1472,1038 1476,1049'],
    [130, 533, '130,1325 185,1332 221,1349 223,1355 239,1360 267,1249 274,1255 340,1259 359,1262 371,1179 395,1198 409,1206 413,1168 416,1174 434,1178 446,1038 455,1046 495,1059 534,1068 540,1081 544,1038 550,1047 552,1003 561,1015 572,1024 580,981 590,997 605,1016 611,1030 619,1032 625,1013 628,1019 629,930 643,948 648,961']
  ] },
  { line: 57, top: 1000, zero: 377, step: 55.35, data: [
    [61, 440, '61,378 101,385 115,369 118,371 136,373 145,376 155,381 164,384 167,391 177,393 183,400 194,417 208,419 211,422 219,415 226,413 236,416 242,419 246,402 280,394 312,386 329,376 341,377 356,380 361,384 396,387 402,379 408,387 424,393 427,384 446,368 455,360 491,365'],
    [570, 440, '570,378 611,386 623,358 629,360 645,362 656,365 665,370 675,373 677,380 685,382 692,389 703,405 716,408 719,412 727,399 733,408 741,411 751,413 755,400 780,390 822,372 839,360 865,363 874,367 904,371 911,356 916,364 932,371 937,374 963,352 1000,358'],
    [1078, 440, '1078,378 1120,386 1132,347 1138,349 1153,351 1163,355 1172,360 1183,362 1185,369 1194,371 1200,377 1212,395 1225,397 1233,404 1241,415 1259,419 1263,413 1283,402 1330,374 1346,356 1373,358 1382,362 1412,367 1419,347 1427,356 1441,359 1445,366 1474,378 1509,384'],
    [86, 656, '86,378 147,386 154,391 166,366 185,369 241,381 245,388 258,389 274,404 284,412 303,417 308,421 320,425 327,433 340,437 357,439 363,433 459,384 486,358 524,361 539,365 583,369 593,345 604,352 627,358 632,362 674,374 728,380'],
    [844, 656, '844,378 904,386 912,391 923,361 929,361 956,366 999,376 1003,382 1017,384 1041,407 1060,411 1066,415 1077,419 1087,429 1115,433 1122,427 1217,367 1244,336 1284,339 1296,343 1341,347 1351,317 1361,325 1386,330 1390,334 1431,347 1487,352']
  ] },
  { line: 82, top: 1000, zero: 884, step: 55.35, data: [
    [61, 440, '61,884 73,887 79,891 90,893 110,904 120,906 124,913 141,913 145,909 147,894 160,897 168,906 180,898 200,900 208,904 211,915 225,918 270,915 310,919 338,928 352,911 356,916 383,935 386,912 389,911 397,915 467,911 471,913 489,909'],
    [570, 440, '570,884 582,887 598,892 618,904 629,906 635,914 648,924 654,935 655,907 667,909 677,920 687,905 716,910 719,923 732,926 779,917 818,922 848,932 861,905 876,916 893,928 895,900 904,909 974,918 978,922 989,917 996,912'],
    [1078, 440, '1078,884 1092,888 1110,894 1127,904 1138,906 1144,916 1156,923 1162,935 1164,896 1175,898 1185,909 1197,888 1224,894 1229,907 1249,910 1289,919 1326,924 1356,934 1369,895 1385,908 1402,919 1403,902 1412,911 1484,921 1486,924 1505,909'],
    [86, 656, '86,885 103,887 108,889 130,893 158,903 174,906 180,914 202,924 210,935 213,914 228,916 244,928 263,902 304,908 308,920 340,925 424,935 456,937 499,947 519,896 538,908 567,920 571,930 585,935 687,944 693,948 722,956'],
    [844, 656, '844,885 861,887 868,890 888,893 916,904 932,906 938,914 961,924 968,935 970,914 987,916 1003,928 1021,902 1051,904 1062,908 1066,918 1090,923 1183,933 1211,935 1236,941 1258,944 1277,884 1284,889 1326,908 1330,918 1343,922 1446,933 1478,945']
  ] },
  { line: 107, top: 1000, zero: 1391.5, step: 55.35, data: [
    [61, 440, '61,1393 143,1394 154,1400 216,1390 233,1394 252,1388 270,1385 297,1392 303,1384 305,1392 392,1384'],
    [570, 440, '570,1393 651,1394 663,1400 725,1385 741,1389 779,1374 812,1384 814,1391 901,1378'],
    [1078, 440, '1078,1393 1160,1394 1172,1400 1233,1380 1250,1383 1290,1386 1320,1395 1322,1404 1410,1406'],
    [86, 656, '86,1393 209,1394 226,1400 317,1374 340,1378 399,1380 447,1389 450,1398 579,1400'],
    [844, 656, '844,1393 967,1394 984,1400 1074,1369 1098,1372 1158,1374 1206,1384 1208,1393 1338,1394']
  ] }
];
const LEFT = 52, WIDTH = 460, TOP = 44.5, HEIGHT = 210;
rows.forEach((row, ri) => {
  row.data.forEach(([x0, w, pts], ci) => {
    const steps = (row.top + 400) / 200;
    const unit = HEIGHT / steps;
    const zeroY = TOP + unit * row.top / 200;
    const pt = columns[ci];
    const title = ri === 0 ? 'RS.SB-1.E21-2.PT-' + pt : 'RS.PT-' + pt + '.SB-1.E21-2.VWAP-' + ri;
    const titleW = (ri === 0 ? 159 : 228) + (ci === 4 ? 9 : 0);
    let svg = '<svg width="533" height="276" viewBox="0 0 533 276">';
    svg += `<text class="title" x="266.500" y="23.500" textLength="${titleW}" lengthAdjust="spacingAndGlyphs">${title}</text>`;
    for (let i = 0; i <= steps; i++) {
      const v = row.top - 200 * i, y = Math.round(TOP + unit * i - .5) + .5;
      if (v !== 0) svg += `<path class="grid" d="M${LEFT} ${y}h${WIDTH}"/>`;
      svg += `<text class="val" x="37.500" y="${y + 5}">${v}</text>`;
    }
    [['2018', 52], ['Apr', 161.5], ['Jul', 272], ['Oct', 382]].forEach(([m, x]) => {
      svg += `<text class="month" x="${x}" y="267">${m}</text>`;
    });
    const line = pts.split(' ').map(p => {
      const [x, y] = p.split(',').map(Number);
      return (LEFT + (x - x0) / w * WIDTH).toFixed(1) + ',' + (zeroY + (y - row.zero) / row.step * unit).toFixed(1);
    }).join(' ');
    svg += `<polyline class="series" points="${line}"/><path class="axis" d="M${LEFT} ${Math.round(zeroY - .5) + .5}h${WIDTH}"/></svg>`;
    const el = add($('canvas'), 'chart');
    el.style.gridArea = `${row.line} / ${2 + 14 * ci} / span 25 / span 14`;
    el.innerHTML = svg;
  });
});
```
